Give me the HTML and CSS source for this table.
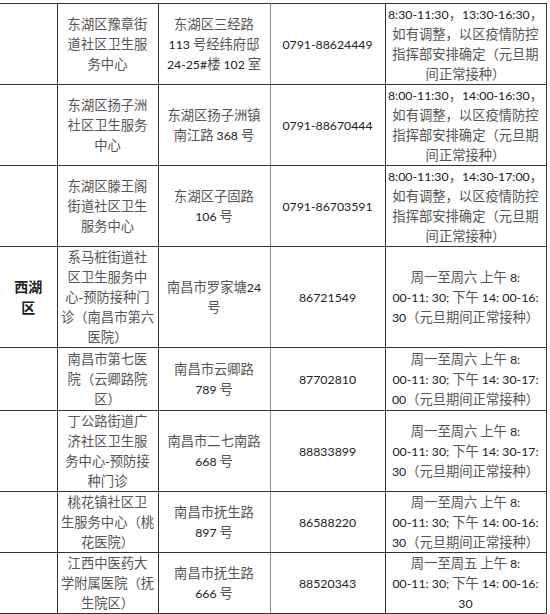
FILE: index.html
```html
<!DOCTYPE html>
<html lang="zh-CN">
<head>
<meta charset="utf-8">
<title>接种门诊</title>
<link rel="stylesheet" href="styles.css">
</head>
<body>
<table class="sched">
  <colgroup>
    <col class="c1"><col class="c2"><col class="c3"><col class="c4"><col class="c5">
  </colgroup>
  <tbody>
    <tr>
      <td class="dist"></td>
      <td>东湖区豫章街<br>道社区卫生服<br>务中心</td>
      <td>东湖区三经路<br><span class="n">113</span> 号经纬府邸<br><span class="n">24-25#</span>楼 <span class="n">102</span> 室</td>
      <td class="tel"><span class="n">0791-88624449</span></td>
      <td><span class="n">8:30-11:30</span>，<span class="n">13:30-16:30</span>，<br>如有调整，以区疫情防控<br>指挥部安排确定（元旦期<br>间正常接种）</td>
    </tr>
    <tr>
      <td class="dist"></td>
      <td>东湖区扬子洲<br>社区卫生服务<br>中心</td>
      <td>东湖区扬子洲镇<br>南江路 <span class="n">368</span> 号</td>
      <td class="tel"><span class="n">0791-88670444</span></td>
      <td><span class="n">8:00-11:30</span>，<span class="n">14:00-16:30</span>，<br>如有调整，以区疫情防控<br>指挥部安排确定（元旦期<br>间正常接种）</td>
    </tr>
    <tr>
      <td class="dist"></td>
      <td>东湖区滕王阁<br>街道社区卫生<br>服务中心</td>
      <td>东湖区子固路<br><span class="n">106</span> 号</td>
      <td class="tel"><span class="n">0791-86703591</span></td>
      <td><span class="n">8:00-11:30</span>，<span class="n">14:30-17:00</span>，<br>如有调整，以区疫情防控<br>指挥部安排确定（元旦期<br>间正常接种）</td>
    </tr>
    <tr>
      <td class="dist"><strong>西湖<br>区</strong></td>
      <td>系马桩街道社<br>区卫生服务中<br>心<span class="n">-</span>预防接种门<br>诊（南昌市第六<br>医院）</td>
      <td>南昌市罗家塘<span class="n">24</span><br>号</td>
      <td class="tel"><span class="n">86721549</span></td>
      <td>周一至周六 上午 <span class="n">8:</span><br><span class="n">00-11: 30;</span> 下午 <span class="n">14: 00-16:</span><br><span class="n">30</span>（元旦期间正常接种）</td>
    </tr>
    <tr class="r5">
      <td class="dist"></td>
      <td>南昌市第七医<br>院（云卿路院<br>区）</td>
      <td>南昌市云卿路<br><span class="n">789</span> 号</td>
      <td class="tel"><span class="n">87702810</span></td>
      <td>周一至周六 上午 <span class="n">8:</span><br><span class="n">00-11: 30;</span> 下午 <span class="n">14: 30-17:</span><br><span class="n">00</span>（元旦期间正常接种）</td>
    </tr>
    <tr>
      <td class="dist"></td>
      <td>丁公路街道广<br>济社区卫生服<br>务中心<span class="n">-</span>预防接<br>种门诊</td>
      <td>南昌市二七南路<br><span class="n">668</span> 号</td>
      <td class="tel"><span class="n">88833899</span></td>
      <td>周一至周六 上午 <span class="n">8:</span><br><span class="n">00-11: 30;</span> 下午 <span class="n">14: 30-17:</span><br><span class="n">30</span>（元旦期间正常接种）</td>
    </tr>
    <tr>
      <td class="dist"></td>
      <td>桃花镇社区卫<br>生服务中心（桃<br>花医院）</td>
      <td>南昌市抚生路<br><span class="n">897</span> 号</td>
      <td class="tel"><span class="n">86588220</span></td>
      <td>周一至周六 上午 <span class="n">8:</span><br><span class="n">00-11: 30;</span> 下午 <span class="n">14: 00-16:</span><br><span class="n">30</span>（元旦期间正常接种）</td>
    </tr>
    <tr>
      <td class="dist"></td>
      <td>江西中医药大<br>学附属医院（抚<br>生院区）</td>
      <td>南昌市抚生路<br><span class="n">666</span> 号</td>
      <td class="tel"><span class="n">88520343</span></td>
      <td>周一至周五 上午 <span class="n">8:</span><br><span class="n">00-11: 30;</span> 下午 <span class="n">14: 00-16:</span><br><span class="n">30</span></td>
    </tr>
    <tr class="next">
      <td class="dist"></td>
      <td></td>
      <td></td>
      <td class="tel"></td>
      <td></td>
    </tr>
  </tbody>
</table>
</body>
</html>
```

FILE: styles.css
```css
html, body {
  margin: 0;
  padding: 0;
  background: #fff;
}

body {
  overflow: hidden;
}

.sched {
  margin-top: 3px;
  border-collapse: collapse;
  table-layout: fixed;
  width: 546px;
  font-family: "Noto Sans CJK SC", sans-serif;
  font-size: 13.3px;
  line-height: 20px;
  color: #555;
}

.c1 { width: 57px; }
.c2 { width: 101px; }
.c3 { width: 112px; }
.c4 { width: 115px; }
.c5 { width: 161px; }

.sched td {
  border: 1px solid #333;
  padding: 0 2px;
  text-align: center;
  vertical-align: middle;
  white-space: nowrap;
  overflow: hidden;
}

.sched td.dist {
  border-left: none;
}

.sched td:nth-child(3) {
  border-right-color: #8a8a8a;
}

.sched td:nth-child(4) {
  border-left-color: #8a8a8a;
}

.dist strong {
  font-weight: 700;
  color: #222;
  font-size: 14px;
  line-height: 20px;
}

.n {
  font-family: Lato, "Liberation Sans", sans-serif;
  font-size: 12.3px;
  line-height: 1;
  color: #222;
}

.r5 td {
  padding-top: 1px;
  padding-bottom: 1px;
}

.next td {
  height: 20px;
}
```
